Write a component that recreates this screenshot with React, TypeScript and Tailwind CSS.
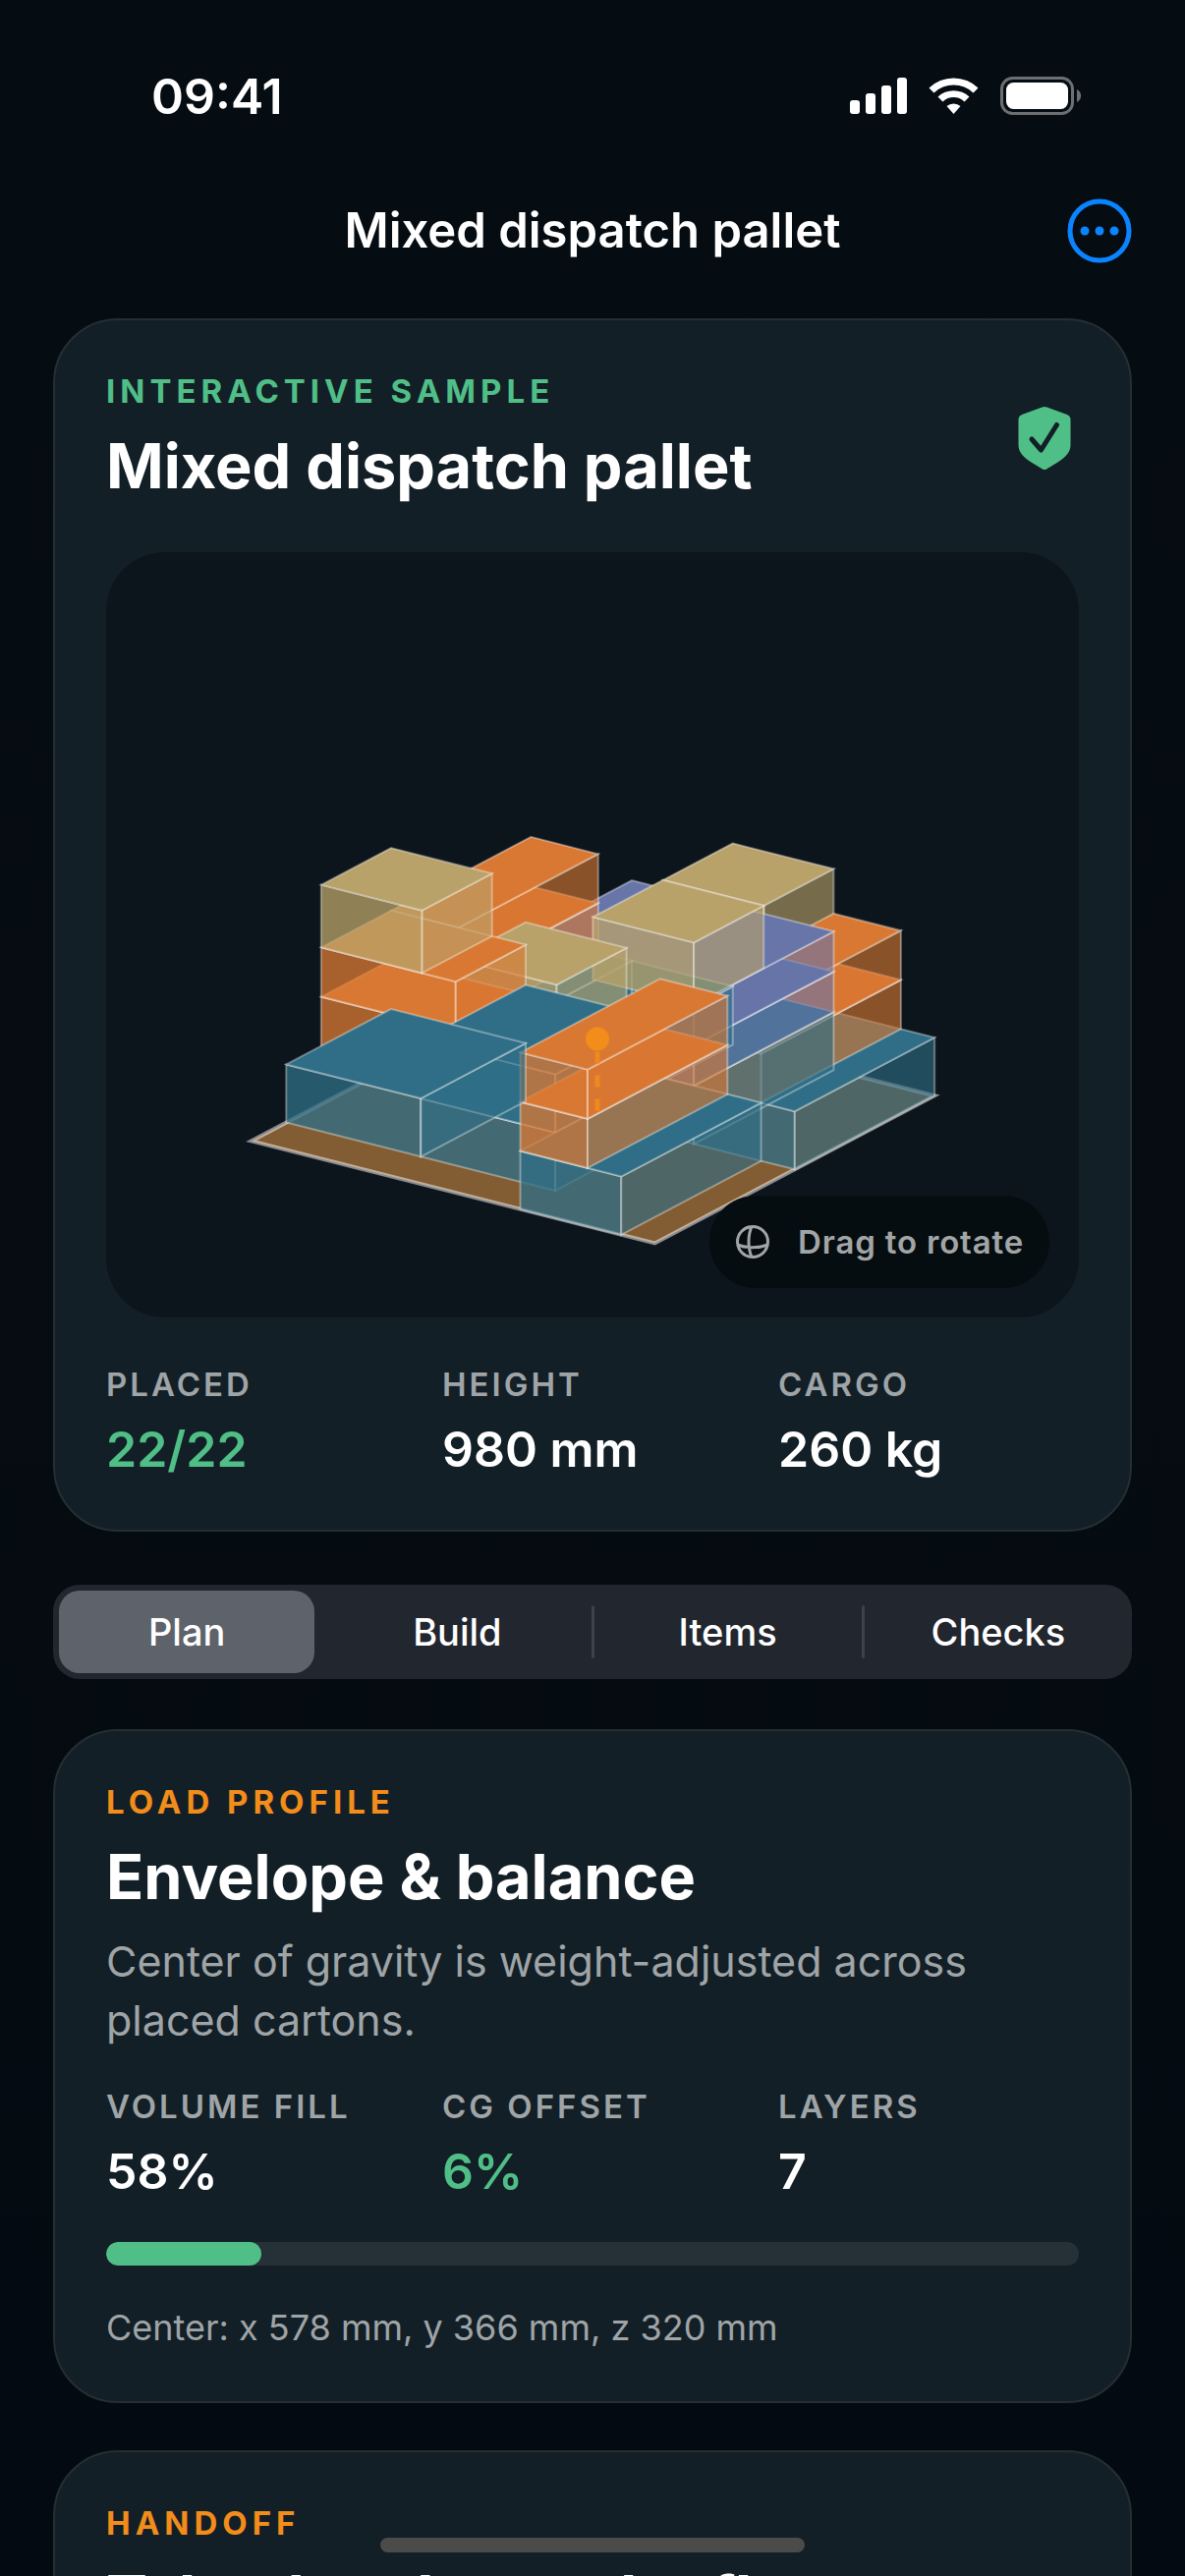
import React, { useState } from 'react';
import clsx from 'clsx';

type Kind = 'blue' | 'orange' | 'yellow' | 'purple';

interface Carton {
  kind: Kind;
  x: number;
  y: number;
  w: number;
  d: number;
  z: number;
}

interface Stat {
  label: string;
  value: string;
  good?: boolean;
}

const COLORS: Record<Kind, string> = {
  blue: '#2f6e86',
  orange: '#d97832',
  yellow: '#b8a269',
  purple: '#6875a8',
};

const HEIGHTS: Record<Kind, number> = { blue: 260, orange: 220, yellow: 280, purple: 180 };

// listed back to front, footprint in 100 mm steps, z in mm
const CARTONS: Carton[] = [
  { kind: 'yellow', x: 6, y: 6, w: 3, d: 2, z: 620 },
  { kind: 'blue', x: 9, y: 4, w: 3, d: 4, z: 0 },
  { kind: 'orange', x: 9, y: 4, w: 2, d: 4, z: 260 },
  { kind: 'orange', x: 9, y: 4, w: 2, d: 4, z: 480 },
  { kind: 'blue', x: 6, y: 4, w: 3, d: 4, z: 0 },
  { kind: 'purple', x: 3, y: 4, w: 6, d: 4, z: 260 },
  { kind: 'purple', x: 3, y: 4, w: 6, d: 4, z: 440 },
  { kind: 'blue', x: 3, y: 4, w: 3, d: 4, z: 0 },
  { kind: 'blue', x: 0, y: 4, w: 3, d: 4, z: 0 },
  { kind: 'orange', x: 0, y: 4, w: 2, d: 4, z: 260 },
  { kind: 'orange', x: 0, y: 4, w: 2, d: 4, z: 480 },
  { kind: 'yellow', x: 6, y: 4, w: 3, d: 2, z: 620 },
  { kind: 'yellow', x: 4, y: 2, w: 3, d: 2, z: 520 },
  { kind: 'orange', x: 0, y: 2, w: 4, d: 2, z: 260 },
  { kind: 'orange', x: 0, y: 2, w: 4, d: 2, z: 480 },
  { kind: 'yellow', x: 0, y: 2, w: 3, d: 2, z: 700 },
  { kind: 'blue', x: 4, y: 1, w: 4, d: 3, z: 0 },
  { kind: 'blue', x: 4, y: 1, w: 4, d: 3, z: 260 },
  { kind: 'blue', x: 8, y: 0, w: 3, d: 4, z: 0 },
  { kind: 'orange', x: 8, y: 0, w: 2, d: 4, z: 260 },
  { kind: 'orange', x: 8, y: 0, w: 2, d: 4, z: 480 },
  { kind: 'blue', x: 0, y: 1, w: 4, d: 3, z: 0 },
];

const project = (x: number, y: number, z: number) => {
  const px = 147.5 + x * 34.2 + y * 35.55;
  const py = 598.8 + x * 8.66 - y * 18.75 - z * 0.2275;
  return `${px.toFixed(1)},${py.toFixed(1)}`;
};

const CartonShape: React.FC<{ carton: Carton }> = ({ carton }) => {
  const { kind, x, y, w, d, z } = carton;
  const top = z + HEIGHTS[kind];
  const front = [project(x, y, z), project(x + w, y, z), project(x + w, y, top), project(x, y, top)];
  const side = [project(x + w, y, z), project(x + w, y + d, z), project(x + w, y + d, top), project(x + w, y, top)];
  const lid = [project(x, y, top), project(x + w, y, top), project(x + w, y + d, top), project(x, y + d, top)];

  return (
    <g fill={COLORS[kind]} stroke="#fff" strokeOpacity={0.35} strokeWidth={2}>
      <polygon points={front.join(' ')} fillOpacity={0.76} />
      <polygon points={side.join(' ')} fillOpacity={0.62} />
      <polygon points={lid.join(' ')} />
    </g>
  );
};

const PalletView = () => {
  const deck = [project(0, 0, 0), project(12, 0, 0), project(12, 8, 0), project(0, 8, 0)];

  return (
    <div className="relative mt-12 overflow-hidden rounded-[60px] bg-[#0d151c]">
      <svg viewBox="0 0 989 778" className="block w-full" role="img" aria-label="Loaded pallet">
        <polygon points={deck.join(' ')} fill="#825c32" stroke="#fff" strokeOpacity={0.5} strokeWidth={4} />
        {CARTONS.map((carton, i) => (
          <CartonShape key={i} carton={carton} />
        ))}
        {/* center of gravity */}
        <path d="M499.5 508v60" stroke="#f28c1b" strokeOpacity={0.85} strokeWidth={5} strokeDasharray="12 12" />
        <circle cx="499.5" cy="495" r="12" fill="#f28c1b" />
      </svg>
      <div className="absolute right-[30px] bottom-[30px] flex h-[94px] items-center gap-7 rounded-full bg-[#060d10] px-[26px] text-[#a2a5a6]">
        <svg viewBox="0 0 36 36" className="size-9" fill="none" stroke="currentColor" strokeWidth="3">
          <circle cx="18" cy="18" r="15.5" />
          <path d="M17 2.5c-4 9-4 22 0 31M2.5 21c9 3.500 22 3.500 31 0" />
        </svg>
        <span className="text-[33px] leading-10 font-semibold tracking-wide">Drag to rotate</span>
      </div>
    </div>
  );
};

const StatRow: React.FC<{ stats: Stat[]; className?: string }> = ({ stats, className }) => (
  <dl className={clsx('grid grid-cols-3 gap-9', className)}>
    {stats.map((stat) => (
      <div key={stat.label}>
        <dt className="text-[33px] leading-10 font-semibold tracking-[3px] whitespace-nowrap text-[#9fa4a7]">{stat.label}</dt>
        <dd className={clsx('mt-4 text-[50px] leading-[60px] font-semibold', stat.good ? 'text-[#50bf87]' : 'text-white')}>
          {stat.value}
        </dd>
      </div>
    ))}
  </dl>
);

const Card: React.FC<{ children: React.ReactNode }> = ({ children }) => (
  <section className="rounded-[66px] border-2 border-[#252e33] bg-[#131f26] p-[52px]">{children}</section>
);

const Eyebrow: React.FC<{ children: React.ReactNode; green?: boolean }> = ({ children, green }) => (
  <p className={clsx('text-[33px] leading-10 font-bold tracking-[5px]', green ? 'text-[#50bf87]' : 'text-[#f28c1b]')}>
    {children}
  </p>
);

const CardTitle: React.FC<{ children: React.ReactNode }> = ({ children }) => (
  <h2 className="mt-4 text-[63px] leading-[80px] font-bold text-white">{children}</h2>
);

const StatusBar = () => (
  <div className="flex h-[195px] items-center justify-between pr-[104px] pl-[154px]">
    <span className="text-[50px] leading-[60px] font-semibold">09:41</span>
    <svg viewBox="0 0 238 40" className="h-10 w-[238px]" fill="#fff">
      <rect x="1" y="24" width="10" height="14" rx="3" />
      <rect x="17" y="17" width="10" height="21" rx="3" />
      <rect x="33" y="9" width="10" height="29" rx="3" />
      <rect x="49" y="1" width="10" height="37" rx="3" />
      <path d="M81.500 11.500a36 36 0 0 1 50 0l-5 5a29 29 0 0 0-40 0z" />
      <path d="M90.500 20.500a23.500 23.500 0 0 1 32 0l-5 5a16 16 0 0 0-22 0z" />
      <path d="M99.500 30a11 11 0 0 1 14 0l-7 8z" />
      <rect x="155.500" y="1.500" width="72" height="36" rx="11" fill="none" stroke="#6c7073" strokeWidth="3" />
      <rect x="160" y="6" width="63" height="27" rx="7.500" />
      <path d="M232 13c5.500 2.500 5.500 10.500 0 13z" fill="#6c7073" />
    </svg>
  </div>
);

const TABS = ['Plan', 'Build', 'Items', 'Checks'];

const App: React.FC = () => {
  const [tab, setTab] = useState('Plan');

  return (
    <div className="relative h-screen overflow-hidden bg-linear-to-b from-[#060d12] to-[#040a11] font-['Inter',sans-serif] text-white">
      <StatusBar />

      <header className="grid h-20 grid-cols-[1fr_auto_1fr] items-center px-[54px]">
        <h1 className="col-start-2 text-[49px] leading-[60px] font-semibold">Mixed dispatch pallet</h1>
        <button type="button" aria-label="More" className="justify-self-end text-[#0a84ff]">
          <svg viewBox="0 0 66 66" className="size-[66px]" fill="currentColor">
            <circle cx="33" cy="33" r="30" fill="none" stroke="currentColor" strokeWidth="5" />
            <circle cx="18" cy="33" r="4.500" />
            <circle cx="33" cy="33" r="4.500" />
            <circle cx="48" cy="33" r="4.500" />
          </svg>
        </button>
      </header>

      <main className="mt-[49px] flex flex-col px-[54px]">
        <Card>
          <div className="flex items-center justify-between">
            <div>
              <Eyebrow green>INTERACTIVE SAMPLE</Eyebrow>
              <CardTitle>Mixed dispatch pallet</CardTitle>
            </div>
            <svg viewBox="0 0 54 66" className="mr-2 h-[66px] w-[54px]">
              <path
                d="M24.500 1.500q2.500-1 5 0l20.500 7.500q3.500 1.500 3.500 5v26c0 8-6 13-13 17.500l-11.500 7q-2 1-4 0l-11.500-7C6.500 53 .5 48 .5 40V14q0-3.500 3.500-5z"
                fill="#50bf87"
              />
              <path d="M14 34l9.500 11L39.500 19.500" fill="none" stroke="#131f26" strokeWidth="5" strokeLinecap="round" strokeLinejoin="round" />
            </svg>
          </div>
          <PalletView />
          <StatRow
            className="mt-12"
            stats={[
              { label: 'PLACED', value: '22/22', good: true },
              { label: 'HEIGHT', value: '980 mm' },
              { label: 'CARGO', value: '260 kg' },
            ]}
          />
        </Card>

        <div className="mt-[54px] mb-[51px] flex h-24 rounded-[27px] bg-[#22262e] p-1.5" role="tablist">
          {TABS.map((name, i) => (
            <React.Fragment key={name}>
              {i > 0 && (
                <span className={clsx('mx-1.5 h-[54px] w-[3px] shrink-0 self-center rounded-full', i > 1 && 'bg-[#3d4148]')} />
              )}
              <button
                type="button"
                role="tab"
                aria-selected={tab === name}
                onClick={() => setTab(name)}
                className={clsx('flex-1 rounded-[21px] text-[38px] leading-10 font-medium', tab === name && 'bg-[#5e626a]')}
              >
                {name}
              </button>
            </React.Fragment>
          ))}
        </div>

        <Card>
          <Eyebrow>LOAD PROFILE</Eyebrow>
          <CardTitle>Envelope &amp; balance</CardTitle>
          <p className="mt-4 text-[43px] leading-[60px] text-[#9fa4a7]">
            Center of gravity is weight-adjusted across placed cartons.
          </p>
          <StatRow
            className="mt-[38px]"
            stats={[
              { label: 'VOLUME FILL', value: '58%' },
              { label: 'CG OFFSET', value: '6%', good: true },
              { label: 'LAYERS', value: '7' },
            ]}
          />
          <div className="mt-[42px] h-6 overflow-hidden rounded-full bg-[#263037]">
            <div className="h-full w-4/25 rounded-full bg-[#50bf87]" />
          </div>
          <p className="mt-10 text-[36px] leading-[46px] text-[#9fa4a7]">Center: x 578 mm, y 366 mm, z 320 mm</p>
        </Card>

        <div className="mt-12">
          <Card>
            <Eyebrow>HANDOFF</Eyebrow>
            <CardTitle>Take the plan to the floor</CardTitle>
          </Card>
        </div>
      </main>

      <div className="absolute bottom-6 left-1/2 h-[15px] w-[432px] -translate-x-1/2 rounded-full bg-[#4b4b4b]" />
    </div>
  );
};

export default App;
